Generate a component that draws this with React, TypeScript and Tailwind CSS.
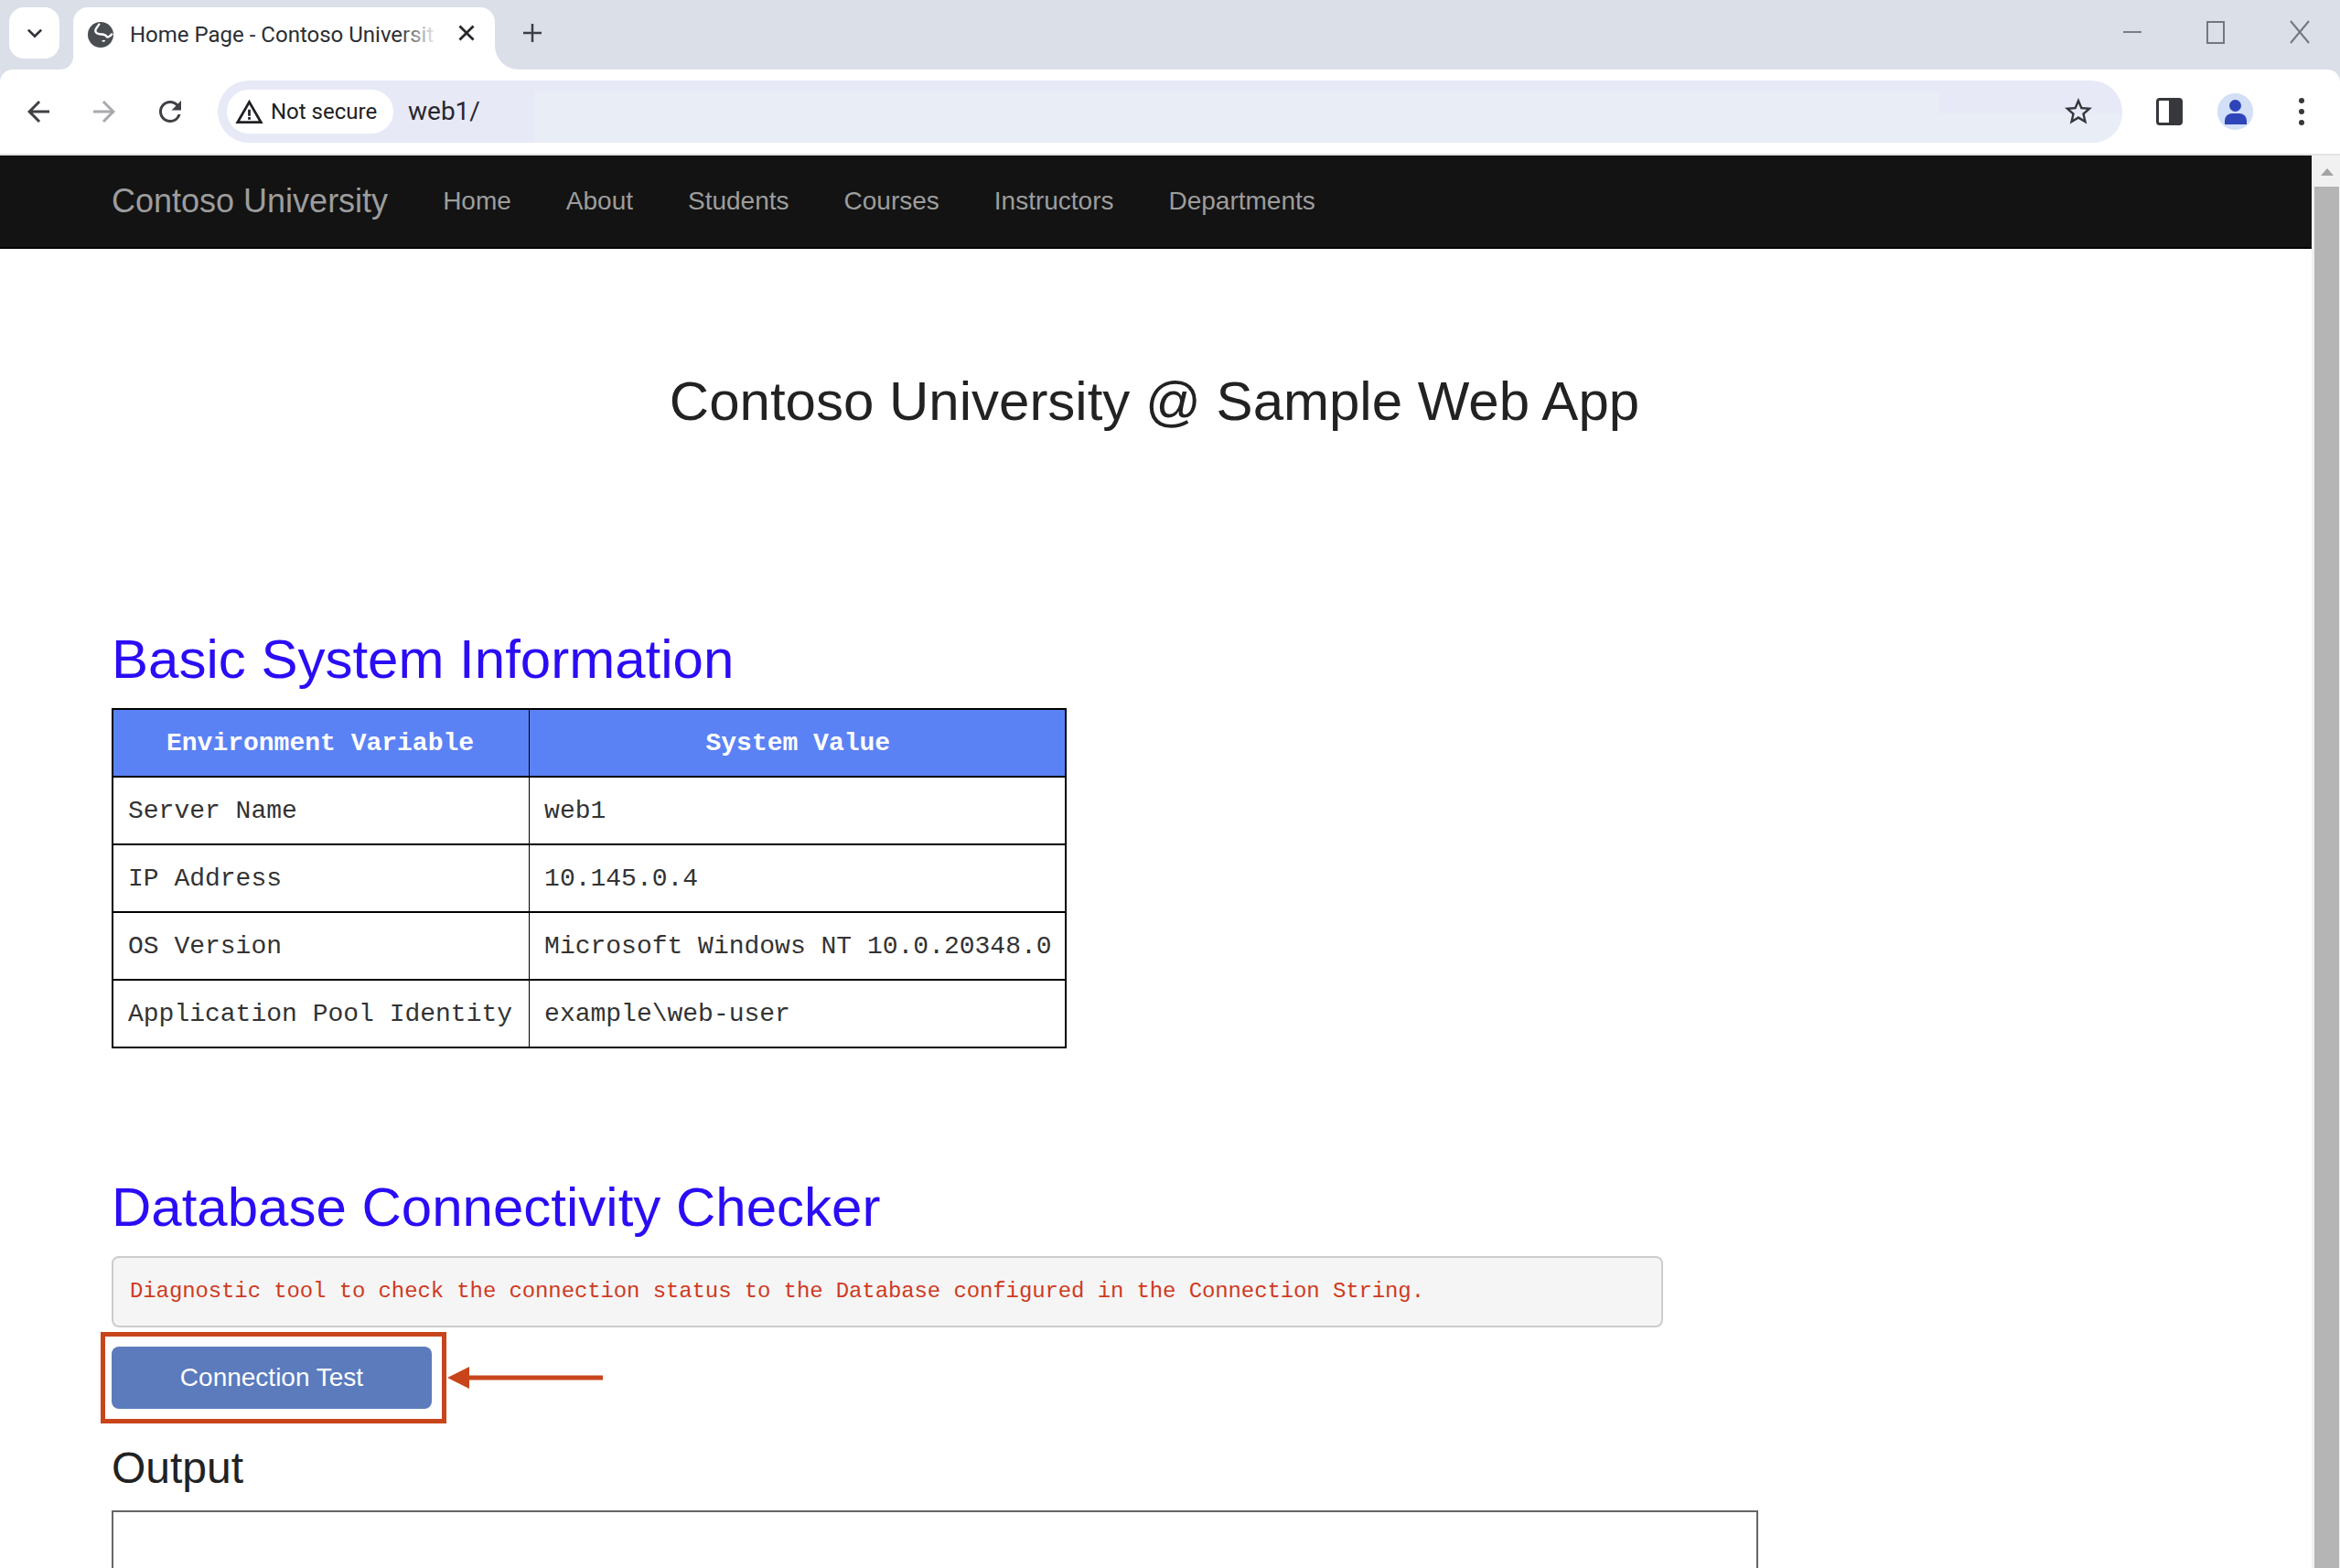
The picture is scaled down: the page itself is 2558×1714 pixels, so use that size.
import React from "react";

const rows = [
    ["Server Name", "web1"],
    ["IP Address", "10.145.0.4"],
    ["OS Version", "Microsoft Windows NT 10.0.20348.0"],
    ["Application Pool Identity", "example\\web-user"],
];

const navLinks = ["Home", "About", "Students", "Courses", "Instructors", "Departments"];

const Icon = ({ d, className }: { d: string; className: string }) => (
    <svg viewBox="0 0 24 24" fill="currentColor" className={className}>
        <path d={d} />
    </svg>
);

const BrowserChrome = () => (
    <div className="bg-[#dbdfe8] font-['Roboto',sans-serif]">
        {/* Tab strip */}
        <div className="h-[76px] flex items-start pl-[10px] pr-[18px]">
            <div className="mt-2 w-[55px] h-14 rounded-2xl bg-white flex items-center justify-center text-[#303338]">
                <Icon d="M6.700 8.300 12 13.600l5.300-5.300 1.600 1.600L12 16.800 5.100 9.900z" className="w-7 h-7" />
            </div>
            <div className="relative ml-[15px] mt-2 w-[461px] h-[68px] rounded-t-2xl bg-white flex items-center pb-2">
                {/* Flared bottom corners of the active tab */}
                <div className="absolute -left-[14px] bottom-0 w-[14px] h-[14px] bg-white">
                    <div className="w-full h-full rounded-br-[14px] bg-[#dbdfe8]" />
                </div>
                <div className="absolute -right-[26px] bottom-0 w-[26px] h-[26px] bg-white">
                    <div className="w-full h-full rounded-bl-[26px] bg-[#dbdfe8]" />
                </div>
                <svg viewBox="0 0 24 24" className="ml-[16px] w-[28px] h-[28px]">
                    <circle cx="12" cy="12" r="12" fill="#4a4d52" />
                    <path
                        d="M11 1.500C9 5 5 8 8.500 10.500 11.500 12.500 16 10.500 17.500 13.500 18.500 15 21 13.500 23 11"
                        fill="none"
                        stroke="#ffffff"
                        strokeWidth="2"
                    />
                    <path d="M13 17.500c1.500-.8 3-.8 3.500.2-.8 1.200-2.500 1.500-3.500-.2z" fill="#ffffff" />
                </svg>
                <span className="ml-[18px] whitespace-nowrap text-[24px] text-[#2c2e33]">
                    Home Page - Contoso Universit
                </span>
                <div className="absolute left-[355px] top-0 w-[44px] h-[60px] bg-gradient-to-r from-white/0 to-white" />
                <Icon
                    d="M6.400 4.700 12 10.300l5.600-5.600 1.700 1.700-5.600 5.600 5.600 5.600-1.700 1.700-5.600-5.600-5.600 5.600-1.700-1.700 5.600-5.600-5.600-5.600z"
                    className="absolute left-[416px] top-[14px] w-[28px] h-[28px] text-[#26282c]"
                />
            </div>
            <Icon d="M11 4h2v7h7v2h-7v7h-2v-7H4v-2h7z" className="ml-[26px] mt-[21px] w-[30px] h-[30px] text-[#3c3f44]" />
            <div className="flex-1" />
            {/* Window controls */}
            <div className="flex items-center gap-[71px] mt-[22px] pr-[15px]">
                <div className="w-[20px] h-[2px] bg-[#7a7d82]" />
                <div className="w-[20px] h-[25px] border-2 border-[#74777c]" />
                <svg viewBox="0 0 22 26" className="w-[22px] h-[26px]" fill="none" stroke="#74777c" strokeWidth="2">
                    <path d="M1 1l20 24M21 1 1 25" />
                </svg>
            </div>
        </div>
        {/* Toolbar */}
        <div className="h-[94px] bg-white rounded-t-[14px] flex items-center border-b-2 border-[#e3e3e3]">
            <div className="w-[238px] flex items-center pl-[24px] gap-[36px]">
                <Icon
                    d="M20 11H7.830l5.590-5.590L12 4l-8 8 8 8 1.410-1.410L7.830 13H20v-2z"
                    className="w-9 h-9 text-[#3f4145]"
                />
                <Icon
                    d="M12 4l-1.410 1.410L16.170 11H4v2h12.170l-5.580 5.590L12 20l8-8z"
                    className="w-9 h-9 text-[#a8aaad]"
                />
                <Icon
                    d="M17.650 6.350A7.958 7.958 0 0 0 12 4c-4.420 0-7.990 3.580-7.990 8s3.570 8 7.990 8c3.730 0 6.840-2.550 7.730-6h-2.080A5.990 5.990 0 0 1 12 18c-3.310 0-6-2.690-6-6s2.690-6 6-6c1.660 0 3.140.69 4.220 1.780L13 11h7V4l-2.350 2.350z"
                    className="w-9 h-9 text-[#3f4145]"
                />
            </div>
            {/* Address bar */}
            <div className="relative w-[2082px] h-[68px] rounded-full bg-[#e8e9f7] flex items-center pl-[10px] pr-[30px]">
                <div className="absolute left-[346px] top-[12px] w-[1536px] h-[24px] bg-[#e9edf6]" />
                <div className="absolute left-[346px] top-[36px] right-0 h-[32px] rounded-br-[34px] bg-[#e9edf6]" />
                <div className="relative h-12 w-[182px] rounded-full bg-white flex items-center pl-[8px] gap-[7px]">
                    <Icon
                        d="M12 5.990 19.530 19H4.470L12 5.990M12 2 1 21h22L12 2zm1 14h-2v2h2zm0-6h-2v5h2z"
                        className="w-[33px] h-[33px] text-[#202124]"
                    />
                    <span className="text-[24px] text-[#202124]">Not secure</span>
                </div>
                <span className="relative ml-[16px] text-[28px] text-[#27272e]">web1/</span>
                <div className="flex-1" />
                <Icon
                    d="M22 9.240l-7.190-.62L12 2 9.190 8.630 2 9.240l5.460 4.730L5.820 21 12 17.270 18.180 21l-1.630-7.030L22 9.240zM12 15.400l-3.760 2.270 1-4.280-3.320-2.880 4.380-.38L12 6.100l1.710 4.040 4.380.38-3.320 2.880 1 4.280L12 15.400z"
                    className="relative w-9 h-9 text-[#36383c]"
                />
            </div>
            {/* Right side actions */}
            <div className="ml-[37px] w-[29px] h-[30px] rounded-[4px] border-[3px] border-[#36383c] flex justify-end">
                <div className="w-[12px] h-full bg-[#36383c]" />
            </div>
            <div className="ml-[38px] w-[39px] h-[40px] rounded-full bg-[#d3def7] flex flex-col items-center justify-center">
                <div className="w-[13px] h-[13px] rounded-full bg-[#2d45b8]" />
                <div className="mt-[2px] w-[24px] h-[12px] rounded-t-[8px] bg-[#2d45b8]" />
            </div>
            <div className="ml-[50px] flex flex-col gap-[6px]">
                <div className="w-[6px] h-[6px] rounded-full bg-[#36383c]" />
                <div className="w-[6px] h-[6px] rounded-full bg-[#36383c]" />
                <div className="w-[6px] h-[6px] rounded-full bg-[#36383c]" />
            </div>
        </div>
    </div>
);

const Page = () => (
    <div className="flex-1 min-w-0 bg-white font-['Liberation_Sans',Arial,sans-serif] text-[#222]">
        <nav className="h-[102px] bg-[#131313] border-b-2 border-black pl-[122px] flex items-center">
            <a className="text-[36px] text-[#9d9d9d] mr-[30px]">Contoso University</a>
            {navLinks.map((link) => (
                <a key={link} className="px-[30px] text-[28px] text-[#9d9d9d]">
                    {link}
                </a>
            ))}
        </nav>

        <div className="pl-[122px]">
            <h1 className="-ml-[122px] pr-[3px] mt-[134px] text-center text-[60px] leading-[66px]">
                Contoso University @ Sample Web App
            </h1>

            <h2 className="mt-[216px] mb-[20px] text-[60px] leading-[66px] text-[#2a0cf5]">
                Basic System Information
            </h2>
            <table className="border-collapse border-2 border-black font-['Liberation_Mono',monospace] text-[28px] leading-[40px] text-[#333]">
                <thead>
                    <tr className="bg-[#5b82f5] text-white">
                        <th className="border-x border-y-2 border-black pl-4 pr-[18px] pt-[17px] pb-[15px] font-bold">Environment Variable</th>
                        <th className="border-x border-y-2 border-black pl-4 pr-[14px] pt-[17px] pb-[15px] font-bold">System Value</th>
                    </tr>
                </thead>
                <tbody>
                    {rows.map(([name, value]) => (
                        <tr key={name}>
                            <td className="border-x border-y-2 border-black pl-4 pr-[18px] pt-[17px] pb-[15px] whitespace-nowrap">{name}</td>
                            <td className="border-x border-y-2 border-black pl-4 pr-[14px] pt-[17px] pb-[15px] whitespace-nowrap">{value}</td>
                        </tr>
                    ))}
                </tbody>
            </table>

            <h2 className="mt-[141px] mb-[20px] text-[60px] leading-[66px] text-[#2a0cf5]">
                Database Connectivity Checker
            </h2>
            <pre className="w-[1696px] h-[78px] rounded-lg border-2 border-[#cccccc] bg-[#f5f5f5] pl-[18px] flex items-center font-['Liberation_Mono',monospace] text-[24px] tracking-[-0.11px] text-[#cf3a22]">
                Diagnostic tool to check the connection status to the Database configured in the Connection String.
            </pre>

            <div className="relative mt-[21px] w-[350px]">
                <button className="w-[350px] h-[68px] rounded-[8px] bg-[#5b7bbd] text-[28px] text-white">
                    Connection Test
                </button>
                {/* Red annotation frame and arrow drawn over the screenshot */}
                <div className="absolute -left-[12px] -top-[16px] w-[378px] h-[100px] border-[5px] border-[#c8451b]" />
                <svg viewBox="0 0 170 24" className="absolute left-[367px] top-[22px] w-[170px] h-[24px]">
                    <path d="M0 12 24 0v9.500h146v5H24V24z" fill="#c8451b" />
                </svg>
            </div>

            <h3 className="mt-[38px] mb-[20px] text-[48px] leading-[53px]">Output</h3>
            <div className="w-[1800px] h-[200px] border-2 border-[#666]" />
        </div>
    </div>
);

const Scrollbar = () => (
    <div className="w-[31px] bg-[#f1f1f1] flex flex-col items-center pl-[3px] pr-[1px]">
        <div className="h-[34px] flex items-center justify-center">
            <div className="mt-[2px] w-0 h-0 border-x-[7px] border-x-transparent border-b-[8px] border-b-[#a3a3a3]" />
        </div>
        <div className="w-full flex-1 bg-[#b5b5b5]" />
    </div>
);

export default function App() {
    return (
        <div className="w-[2558px] h-[1714px] overflow-hidden flex flex-col">
            <BrowserChrome />
            <div className="flex flex-1 min-h-0 overflow-hidden">
                <Page />
                <Scrollbar />
            </div>
        </div>
    );
}
